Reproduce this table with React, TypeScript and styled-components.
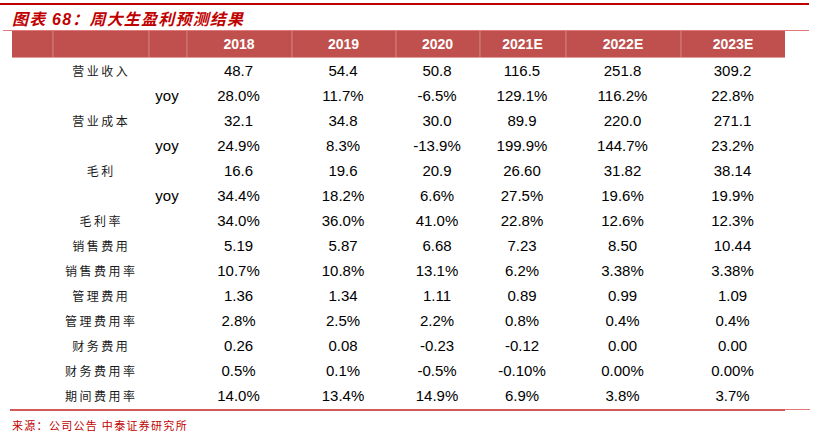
import React from "react";
import styled, { createGlobalStyle } from "styled-components";

const Global = createGlobalStyle`
  html, body { margin: 0; padding: 0; background: #fff; }
  body { font-family: "Liberation Sans", Arial, sans-serif; }
`;

const COLS = "40px 96px 38px 105px 104px 84px 86px 115px 105px";

const Page = styled.div`
  width: 813px;
  height: 447px;
  padding-top: 3px;
  box-sizing: border-box;
  background: #fff;
`;

const TopRule = styled.div`
  width: 809px;
  height: 2px;
  background: #c00000;
`;

const Title = styled.div`
  height: 25px;
  padding-left: 12px;
  display: flex;
  align-items: center;
  font-family: "Liberation Sans", "Noto Sans CJK SC", sans-serif;
  font-size: 16px;
  font-weight: bold;
  font-style: italic;
  color: #c00000;
  letter-spacing: 1.2px;
  white-space: pre;
`;

const ThinRule = styled.div`
  margin-left: 3px;
  width: 806px;
  height: 1px;
  background: #e07a7a;
`;

const Table = styled.div`
  margin-left: 12px;
  width: 773px;
`;

const HeaderRow = styled.div`
  display: grid;
  grid-template-columns: ${COLS};
  height: 26px;
  background: #c0504d;
  border-bottom: 1px solid #e39a98;
`;

const HeadCell = styled.div<{ $line?: boolean }>`
  display: flex;
  align-items: center;
  justify-content: center;
  color: #fff;
  font-weight: bold;
  font-size: 14px;
  border-left: ${(p) => (p.$line ? "1px solid rgba(255,255,255,0.18)" : "none")};
  box-shadow: ${(p) => (p.$line ? "inset 8px 0 0 -7px rgba(255,255,255,0.14)" : "none")};
`;

const Row = styled.div`
  display: grid;
  grid-template-columns: ${COLS};
  height: 25px;
  align-items: center;
`;

const Label = styled.div`
  grid-column: 2 / 3;
  white-space: nowrap;
  font-family: "Noto Sans CJK SC", sans-serif;
  font-size: 12px;
  letter-spacing: 2.5px;
  padding-left: 2.5px;
  color: #1a1a1a;
  display: flex;
  justify-content: center;
`;

const Yoy = styled.div`
  grid-column: 3 / 4;
  text-align: center;
  font-size: 15px;
  color: #000;
`;

const Num = styled.div`
  text-align: center;
  font-size: 15px;
  color: #000;
`;

const BottomRule = styled.div`
  display: flex;
  align-items: flex-start;
  margin-left: 10px;
  margin-top: 1px;
`;

const ThickSeg = styled.div`
  width: 775px;
  height: 2px;
  background: #d35a5a;
`;

const ThinSeg = styled.div`
  width: 25px;
  height: 1px;
  background: #e07a7a;
`;

const Source = styled.div`
  padding-left: 12px;
  margin-top: 6px;
  font-family: "Noto Sans CJK SC", sans-serif;
  font-size: 11px;
  letter-spacing: 1.3px;
  color: #c00000;
`;

type R = { label?: string; yoy?: boolean; v: string[] };

const rows: R[] = [
  { label: "营业收入", v: ["48.7", "54.4", "50.8", "116.5", "251.8", "309.2"] },
  { yoy: true, v: ["28.0%", "11.7%", "-6.5%", "129.1%", "116.2%", "22.8%"] },
  { label: "营业成本", v: ["32.1", "34.8", "30.0", "89.9", "220.0", "271.1"] },
  { yoy: true, v: ["24.9%", "8.3%", "-13.9%", "199.9%", "144.7%", "23.2%"] },
  { label: "毛利", v: ["16.6", "19.6", "20.9", "26.60", "31.82", "38.14"] },
  { yoy: true, v: ["34.4%", "18.2%", "6.6%", "27.5%", "19.6%", "19.9%"] },
  { label: "毛利率", v: ["34.0%", "36.0%", "41.0%", "22.8%", "12.6%", "12.3%"] },
  { label: "销售费用", v: ["5.19", "5.87", "6.68", "7.23", "8.50", "10.44"] },
  { label: "销售费用率", v: ["10.7%", "10.8%", "13.1%", "6.2%", "3.38%", "3.38%"] },
  { label: "管理费用", v: ["1.36", "1.34", "1.11", "0.89", "0.99", "1.09"] },
  { label: "管理费用率", v: ["2.8%", "2.5%", "2.2%", "0.8%", "0.4%", "0.4%"] },
  { label: "财务费用", v: ["0.26", "0.08", "-0.23", "-0.12", "0.00", "0.00"] },
  { label: "财务费用率", v: ["0.5%", "0.1%", "-0.5%", "-0.10%", "0.00%", "0.00%"] },
  { label: "期间费用率", v: ["14.0%", "13.4%", "14.9%", "6.9%", "3.8%", "3.7%"] },
];

const years = ["2018", "2019", "2020", "2021E", "2022E", "2023E"];

export default function App() {
  return (
    <Page>
      <Global />
      <TopRule />
      <Title>图表 68：周大生盈利预测结果</Title>
      <ThinRule />
      <Table>
        <HeaderRow>
          <HeadCell />
          <HeadCell $line />
          <HeadCell $line />
          {years.map((y) => (
            <HeadCell key={y} $line>
              {y}
            </HeadCell>
          ))}
        </HeaderRow>
        {rows.map((r, i) => (
          <Row key={i}>
            {r.yoy ? <Yoy>yoy</Yoy> : <Label>{r.label}</Label>}
            {r.yoy ? null : <div />}
            {r.v.map((x, j) => (
              <Num key={j}>{x}</Num>
            ))}
          </Row>
        ))}
      </Table>
      <BottomRule>
        <ThickSeg />
        <ThinSeg />
      </BottomRule>
      <Source>来源：公司公告 中泰证券研究所</Source>
    </Page>
  );
}
